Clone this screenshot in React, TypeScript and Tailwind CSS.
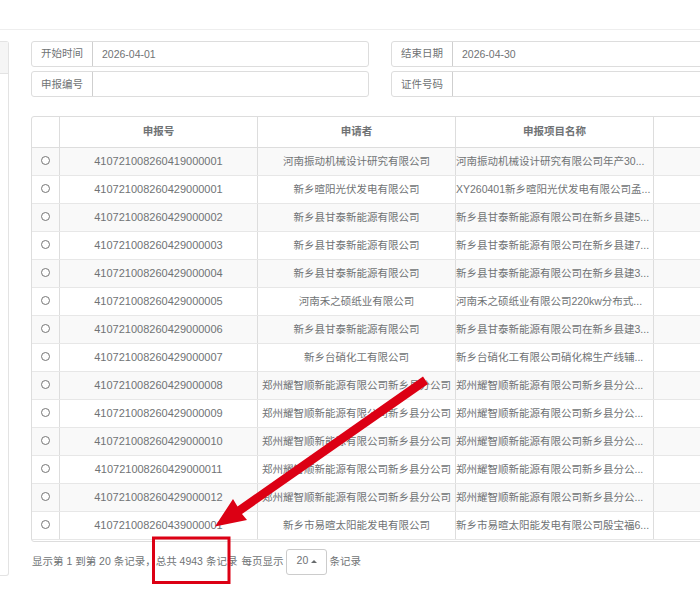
const FONT = "font-['Liberation_Sans','Noto_Sans_CJK_SC',sans-serif]";

const ROWS: [string, string, string][] = [
  ["410721008260419000001", "河南振动机械设计研究有限公司", "河南振动机械设计研究有限公司年产30..."],
  ["410721008260429000001", "新乡暄阳光伏发电有限公司", "XY260401新乡暄阳光伏发电有限公司孟..."],
  ["410721008260429000002", "新乡县甘泰新能源有限公司", "新乡县甘泰新能源有限公司在新乡县建5..."],
  ["410721008260429000003", "新乡县甘泰新能源有限公司", "新乡县甘泰新能源有限公司在新乡县建7..."],
  ["410721008260429000004", "新乡县甘泰新能源有限公司", "新乡县甘泰新能源有限公司在新乡县建3..."],
  ["410721008260429000005", "河南禾之硕纸业有限公司", "河南禾之硕纸业有限公司220kw分布式..."],
  ["410721008260429000006", "新乡县甘泰新能源有限公司", "新乡县甘泰新能源有限公司在新乡县建3..."],
  ["410721008260429000007", "新乡台硝化工有限公司", "新乡台硝化工有限公司硝化棉生产线辅..."],
  ["410721008260429000008", "郑州耀智顺新能源有限公司新乡县分公司", "郑州耀智顺新能源有限公司新乡县分公..."],
  ["410721008260429000009", "郑州耀智顺新能源有限公司新乡县分公司", "郑州耀智顺新能源有限公司新乡县分公..."],
  ["410721008260429000010", "郑州耀智顺新能源有限公司新乡县分公司", "郑州耀智顺新能源有限公司新乡县分公..."],
  ["410721008260429000011", "郑州耀智顺新能源有限公司新乡县分公司", "郑州耀智顺新能源有限公司新乡县分公..."],
  ["410721008260429000012", "郑州耀智顺新能源有限公司新乡县分公司", "郑州耀智顺新能源有限公司新乡县分公..."],
  ["410721008260439000001", "新乡市易暄太阳能发电有限公司", "新乡市易暄太阳能发电有限公司殷宝福6..."],
];

function Field({ label, value, low }: { label: string; value?: string; low?: boolean }) {
  return (
    <div className="flex h-[26px] w-[338px] rounded-[3px] border border-[#dddddd]">
      <div className={`flex w-[61px] shrink-0 items-center justify-center border-r border-[#cfcfcf] ${low ? "pt-[2px]" : ""}`}>{label}</div>
      <div className="flex-1 pl-[9px] leading-[24px]">{value}</div>
    </div>
  );
}

export default function App() {
  return (
    <div className={`relative h-[606px] w-[700px] overflow-hidden bg-white text-[10.5px] text-[#707375] ${FONT}`}>
      <div className="h-[30px] border-b border-[#eeeeee]" />
      <div className="flex pt-[11px]">
        {/* collapsed left panel */}
        <div className="h-[535px] w-[9px] shrink-0 rounded-r-[3px] border border-l-0 border-[#e3e3e3]">
          <div className="h-[32px] border-b border-[#e3e3e3] bg-[#f5f5f5]" />
        </div>

        <div className="ml-[22px] w-[800px] shrink-0">
          <div className="grid w-[720px] grid-cols-[338px_338px] gap-x-[22px] gap-y-[4px]">
            <Field label="开始时间" value="2026-04-01" />
            <Field label="结束日期" value="2026-04-30" />
            <Field label="申报编号" low />
            <Field label="证件号码" low />
          </div>

          <div className="mt-[19px] w-[800px] rounded-[3px] border border-[#dddddd] pb-[1px]">
            <div className="flex h-[31px] border-b border-[#dddddd] font-bold">
              <div className="w-[27px] shrink-0" />
              <div className="flex w-[198px] shrink-0 items-center justify-center border-l border-[#dddddd]">申报号</div>
              <div className="flex w-[198px] shrink-0 items-center justify-center border-l border-[#dddddd]">申请者</div>
              <div className="flex w-[198px] shrink-0 items-center justify-center border-l border-[#dddddd]">申报项目名称</div>
              <div className="flex-1 border-l border-[#dddddd]" />
            </div>
            {ROWS.map(([no, who, name], i) => (
              <div key={no} className={`flex h-[28px] border-b border-[#e7e7e7] ${i % 2 === 0 ? "bg-[#f9f9f9]" : "bg-white"}`}>
                <div className="flex w-[27px] shrink-0 items-center justify-center">
                  <span className="mb-[2px] h-[9px] w-[9px] rounded-full border border-[#767676] bg-white" />
                </div>
                <div className="flex w-[198px] shrink-0 items-center justify-center border-l border-[#dddddd] text-[11px]">{no}</div>
                <div className="flex w-[198px] shrink-0 items-center justify-center whitespace-nowrap border-l border-[#dddddd]">{who}</div>
                <div className="flex w-[198px] shrink-0 items-center whitespace-nowrap border-l border-[#dddddd]">{name}</div>
                <div className="flex-1 border-l border-[#dddddd]" />
              </div>
            ))}
          </div>

          <div className="mt-[7px] flex items-center pl-[1px]">
            <span>显示第 1 到第 20 条记录，总共 4943 条记录</span>
            <span className="ml-[4px]">每页显示</span>
            <span className="ml-[3px] flex h-[26px] w-[41px] items-center justify-center rounded-[3px] border border-[#cccccc] pb-[2px]">
              20
              <span className="ml-[3px] mt-[1px] h-0 w-0 border-x-[3px] border-b-[3px] border-x-transparent border-b-[#676a6c]" />
            </span>
            <span className="ml-[2px]">条记录</span>
          </div>
        </div>
      </div>

      {/* annotation drawn over the screenshot */}
      <svg className="absolute left-0 top-0" width="700" height="606" viewBox="0 0 700 606">
        <rect x="153.5" y="538" width="75.5" height="44.5" fill="none" stroke="#dc0014" strokeWidth="3" />
        <path d="M423 376.5 L428 384 L242 514 L247 520 L215 526.5 L233 499 L237.5 506.5 Z" fill="#dc0014" />
      </svg>
    </div>
  );
}
